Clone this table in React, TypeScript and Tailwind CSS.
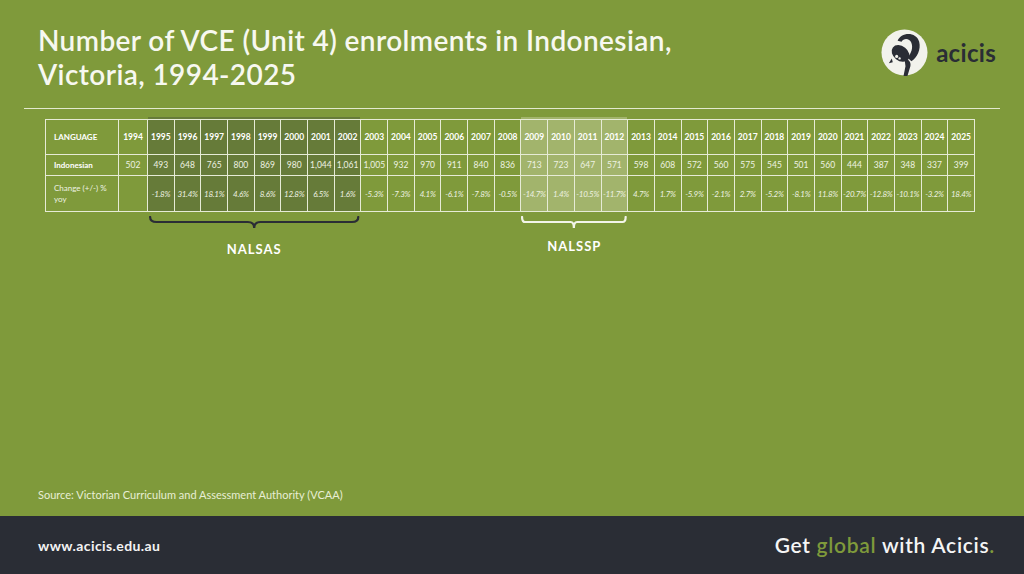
import React from "react"

const years = Array.from({ length: 32 }, (_, i) => 1994 + i)

const values = [
  "502", "493", "648", "765", "800", "869", "980", "1,044", "1,061", "1,005", "932", "970", "911", "840", "836",
  "713", "723", "647", "571", "598", "608", "572", "560", "575", "545", "501", "560", "444", "387", "348", "337", "399",
]

const changes = [
  "", "-1.8%", "31.4%", "18.1%", "4.6%", "8.6%", "12.8%", "6.5%", "1.6%", "-5.3%", "-7.3%", "4.1%", "-6.1%", "-7.8%", "-0.5%",
  "-14.7%", "1.4%", "-10.5%", "-11.7%", "4.7%", "1.7%", "-5.9%", "-2.1%", "2.7%", "-5.2%", "-8.1%", "11.8%", "-20.7%", "-12.8%", "-10.1%", "-3.2%", "18.4%",
]

// shading for the programme years
const cellBg = (year: number) => {
  if (year >= 1995 && year <= 2002) return "bg-[#667b39]"
  if (year >= 2009 && year <= 2012) return "bg-[#a2b46c]"
  return "bg-[#7f9a3b]"
}

const grid = "grid grid-cols-[72px_28px_repeat(31,minmax(0,1fr))] gap-x-px"

const Logo = () => (
  <div className="flex items-center gap-[8px]">
    <svg width="47" height="47" viewBox="0 0 48 48">
      <circle cx="24" cy="24" r="23.5" fill="#f2f2ec" />
      <path
        d="M17 12 C20 3 36 2 39 13 C41 21 37 29 31 33 L27 29 C31 25 33 19 31 14 C29 9 23 9 21 13 Z"
        fill="#2a2d35"
      />
      <ellipse cx="20" cy="25" rx="10" ry="7.5" transform="rotate(38 20 25)" fill="#2a2d35" />
      <path d="M24 30 C28 31 31 33 30 38 L27 48 L23 48 L25 38 Z" fill="#2a2d35" />
      <path d="M11 30 L8 35 L12 34 Z" fill="#2a2d35" />
      <circle cx="16" cy="28" r="1.6" fill="#f2f2ec" />
      <circle cx="19" cy="30" r="1.2" fill="#f2f2ec" />
    </svg>
    <span className="text-[24px] font-bold text-[#2a2d35] leading-none tracking-[0.3px]">acicis</span>
  </div>
)

const Brace = ({ color }: { color: string }) => (
  <svg className="w-full h-[14px]" viewBox="0 0 100 14" preserveAspectRatio="none">
    <path
      d="M1 1 Q1 6 4 6 L47 6 Q50 6 50 12 Q50 6 53 6 L96 6 Q99 6 99 1"
      fill="none"
      stroke={color}
      strokeWidth="2.2"
      vectorEffect="non-scaling-stroke"
      strokeLinecap="round"
    />
  </svg>
)

export default function App() {
  return (
    <div className="w-[1024px] h-[574px] flex flex-col bg-[#7f9a3b] text-white font-['Lato','Open_Sans',sans-serif] overflow-hidden">
      <div className="flex-1 flex flex-col">
        {/* heading */}
        <div className="flex justify-between items-start pl-[38px] pr-[28px] pt-[23px]">
          <h1 className="text-[28px] leading-[34px] font-semibold tracking-[0.4px] text-[#f7f8f0]">
            Number of VCE (Unit 4) enrolments in Indonesian,
            <br />
            Victoria, 1994-2025
          </h1>
          <div className="pt-[6px]">
            <Logo />
          </div>
        </div>
        <div className="mx-[24px] mt-[17px] h-px bg-[#e3e9cf]" />

        {/* table */}
        <div className="ml-[45px] mt-[8px] w-[930px]">
          <div className={`${grid} h-[2px] px-px`}>
            <div className="col-start-3 col-span-8 bg-[#667b39]" />
            <div className="col-start-[17] col-span-4 bg-[#a2b46c]" />
          </div>
          <div className={`${grid} gap-y-px bg-[#e6ebd6] p-px`}>
            <div className="bg-[#7f9a3b] h-[34px] flex items-center pl-[8px] text-[8px] font-bold">LANGUAGE</div>
            {years.map((y) => (
              <div key={y} className={`${cellBg(y)} h-[34px] flex items-center justify-center text-[8.5px] font-bold`}>
                {y}
              </div>
            ))}
            <div className="bg-[#7f9a3b] h-[20px] flex items-center pl-[8px] text-[8px] font-bold">Indonesian</div>
            {years.map((y, i) => (
              <div key={y} className={`${cellBg(y)} h-[20px] flex items-center justify-center text-[8.5px] text-[#eef2e2]`}>
                {values[i]}
              </div>
            ))}
            <div className="bg-[#7f9a3b] h-[35px] flex items-center pl-[8px] pr-[6px] text-[8px] leading-[11px] text-[#eef2e2]">
              Change (+/-) % yoy
            </div>
            {years.map((y, i) => (
              <div key={y} className={`${cellBg(y)} h-[35px] flex items-center justify-center text-[8px] italic text-[#eef2e2] whitespace-nowrap tracking-[-0.3px]`}>
                {changes[i]}
              </div>
            ))}
          </div>

          {/* programme labels */}
          <div className={`${grid} px-px mt-[4px]`}>
            <div className="col-start-3 col-span-8 flex flex-col items-center">
              <Brace color="#2a2d35" />
              <span className="mt-[10px] text-[13px] font-bold tracking-[1px]">NALSAS</span>
            </div>
            <div className="col-start-[17] col-span-4 flex flex-col items-center">
              <Brace color="#f2f4e8" />
              <span className="mt-[7px] text-[13px] font-bold tracking-[1px]">NALSSP</span>
            </div>
          </div>
        </div>

        <div className="flex-1" />
        <p className="pl-[38px] pb-[13px] text-[11px] text-[#e8eed5]">
          Source: Victorian Curriculum and Assessment Authority (VCAA)
        </p>
      </div>

      {/* footer */}
      <div className="h-[58px] bg-[#2a2d35] flex items-center justify-between pl-[38px] pr-[29px]">
        <span className="text-[14px] font-bold text-[#f3f3f3] tracking-[0.4px]">www.acicis.edu.au</span>
        <span className="text-[21px] font-semibold text-[#f5f5f5] tracking-[0.7px]">
          Get <span className="text-[#7f9a3b]">global</span> with Acicis<span className="text-[#7f9a3b]">.</span>
        </span>
      </div>
    </div>
  )
}
